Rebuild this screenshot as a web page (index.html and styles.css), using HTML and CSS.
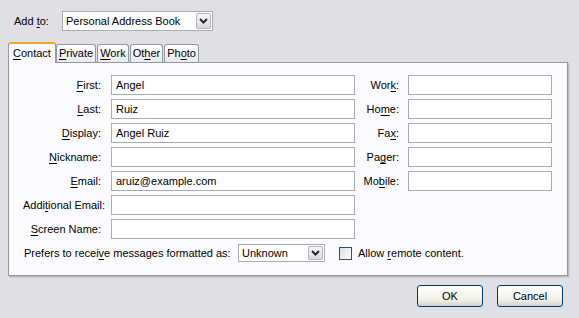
FILE: index.html
```html
<!DOCTYPE html>
<html>
<head>
    <title>New Contact</title>
    <link rel="stylesheet" href="styles.css">
</head>
<body>
    <div class="dialog">
        <div class="add-row">
            <label class="add-label">Add <u>t</u>o:</label>
            <div class="combo combo-book">
                <span class="combo-text">Personal Address Book</span>
                <span class="combo-btn"><svg width="9" height="6" viewBox="0 0 9 6"><path d="M1 1 L4.5 4.5 L8 1" fill="none" stroke="#2b2b2b" stroke-width="2"/></svg></span>
            </div>
        </div>

        <div class="tabs">
            <div class="tab tab-active"><u>C</u>ontact</div>
            <div class="tab"><u>P</u>rivate</div>
            <div class="tab"><u>W</u>ork</div>
            <div class="tab">Ot<u>h</u>er</div>
            <div class="tab">Ph<u>o</u>to</div>
        </div>

        <div class="panel">
            <div class="fields">
                <label class="field-label"><u>F</u>irst:</label>
                <input class="field-input" type="text" value="Angel">
                <label class="field-label label-right">Wor<u>k</u>:</label>
                <input class="field-input" type="text" value="">

                <label class="field-label"><u>L</u>ast:</label>
                <input class="field-input" type="text" value="Ruiz">
                <label class="field-label label-right">Ho<u>m</u>e:</label>
                <input class="field-input" type="text" value="">

                <label class="field-label"><u>D</u>isplay:</label>
                <input class="field-input" type="text" value="Angel Ruiz">
                <label class="field-label label-right">Fa<u>x</u>:</label>
                <input class="field-input" type="text" value="">

                <label class="field-label"><u>N</u>ickname:</label>
                <input class="field-input" type="text" value="">
                <label class="field-label label-right">Pa<u>g</u>er:</label>
                <input class="field-input" type="text" value="">

                <label class="field-label"><u>E</u>mail:</label>
                <input class="field-input" type="text" value="aruiz@example.com">
                <label class="field-label label-right">Mo<u>b</u>ile:</label>
                <input class="field-input" type="text" value="">

                <label class="field-label">Addi<u>t</u>ional Email:</label>
                <input class="field-input" type="text" value="">
                <span></span><span></span>

                <label class="field-label"><u>S</u>creen Name:</label>
                <input class="field-input" type="text" value="">
                <span></span><span></span>
            </div>

            <div class="format-row">
                <label class="format-label">Prefers to recei<u>v</u>e messages formatted as:</label>
                <div class="combo combo-format">
                    <span class="combo-text">Unknown</span>
                    <span class="combo-btn"><svg width="9" height="6" viewBox="0 0 9 6"><path d="M1 1 L4.5 4.5 L8 1" fill="none" stroke="#2b2b2b" stroke-width="2"/></svg></span>
                </div>
                <span class="checkbox"></span>
                <label class="check-label">Allow <u>r</u>emote content.</label>
            </div>
        </div>

        <div class="buttons">
            <button class="btn">OK</button>
            <button class="btn">Cancel</button>
        </div>
    </div>
</body>
</html>
```

FILE: styles.css
```css
body {
    margin: 0;
    background-color: #e0dfe3;
    font-family: 'Liberation Sans', Arial, sans-serif;
    font-size: 11px;
    color: #000;
}

u {
    text-decoration-thickness: 1px;
    text-underline-offset: 2px;
}

.dialog {
    width: 579px;
    height: 318px;
    padding: 11px 0 0 8px;
    box-sizing: border-box;
}

.add-row {
    display: flex;
    align-items: center;
    height: 20px;
}

.add-label {
    width: 54px;
    padding-left: 6px;
    box-sizing: border-box;
}

.combo {
    display: flex;
    align-items: center;
    background-color: #fff;
    border: 1px solid #a5acb2;
    box-sizing: border-box;
}

.combo-book {
    width: 151px;
    height: 20px;
}

.combo-format {
    width: 87px;
    height: 18px;
}

.combo-text {
    flex: 1;
    padding-left: 3px;
    white-space: nowrap;
}

.combo-btn {
    display: flex;
    align-items: center;
    justify-content: center;
    width: 15px;
    align-self: stretch;
    margin: 1px;
    background: linear-gradient(#f7f7f9, #d9d8e2);
    border: 1px solid #b4b3c2;
    border-radius: 2px;
    box-sizing: border-box;
}

.tabs {
    display: flex;
    align-items: flex-end;
    height: 21px;
    margin-top: 10px;
    position: relative;
    z-index: 1;
}

.tab {
    height: 18px;
    padding: 0 2px;
    margin-right: 1px;
    line-height: 17px;
    background: linear-gradient(#ffffff, #e8e8ef);
    border: 1px solid #919b9c;
    border-bottom: none;
    border-radius: 3px 3px 0 0;
    box-sizing: border-box;
}

.tab-active {
    height: 21px;
    padding: 0 4px;
    line-height: 19px;
    background: #fcfcfe;
    border-top: 2px solid #f5a623;
    margin-bottom: -1px;
    margin-right: 0;
}

.panel {
    width: 560px;
    height: 214px;
    padding: 12px 0 0 14px;
    background-color: #fcfcfe;
    border: 1px solid #919b9c;
    box-shadow: 1px 1px 0 #b9b8c6, 2px 2px 0 #d0cfd6;
    box-sizing: border-box;
}

.fields {
    display: grid;
    grid-template-columns: 88px 244px 53px 144px;
    grid-auto-rows: 20px;
    row-gap: 4px;
    align-items: center;
}

.field-label {
    text-align: right;
    white-space: nowrap;
    padding-right: 10px;
}

.label-right {
    padding-right: 9px;
}

.field-input {
    height: 20px;
    width: 100%;
    margin: 0;
    padding: 0 0 0 4px;
    border: 1px solid #a5acb2;
    background: #fff;
    font-family: inherit;
    font-size: 11px;
    color: #000;
    box-sizing: border-box;
    outline: none;
}

.format-row {
    display: flex;
    align-items: center;
    height: 18px;
    margin-top: 5px;
    padding-left: 1px;
}

.format-label {
    width: 214px;
    white-space: nowrap;
}

.checkbox {
    width: 13px;
    height: 13px;
    margin-left: 14px;
    margin-right: 6px;
    border: 1px solid #1c5180;
    background: linear-gradient(135deg, #dcdcd7, #ffffff);
    box-sizing: border-box;
}

.buttons {
    display: flex;
    justify-content: flex-end;
    gap: 14px;
    width: 555px;
    margin-top: 9px;
}

.btn {
    width: 66px;
    height: 22px;
    padding: 0;
    font-family: inherit;
    font-size: 11px;
    color: #000;
    background: linear-gradient(#ffffff, #f0f0ea 70%, #d6d0c5);
    border: 1px solid #003c74;
    border-radius: 3px;
}
```
